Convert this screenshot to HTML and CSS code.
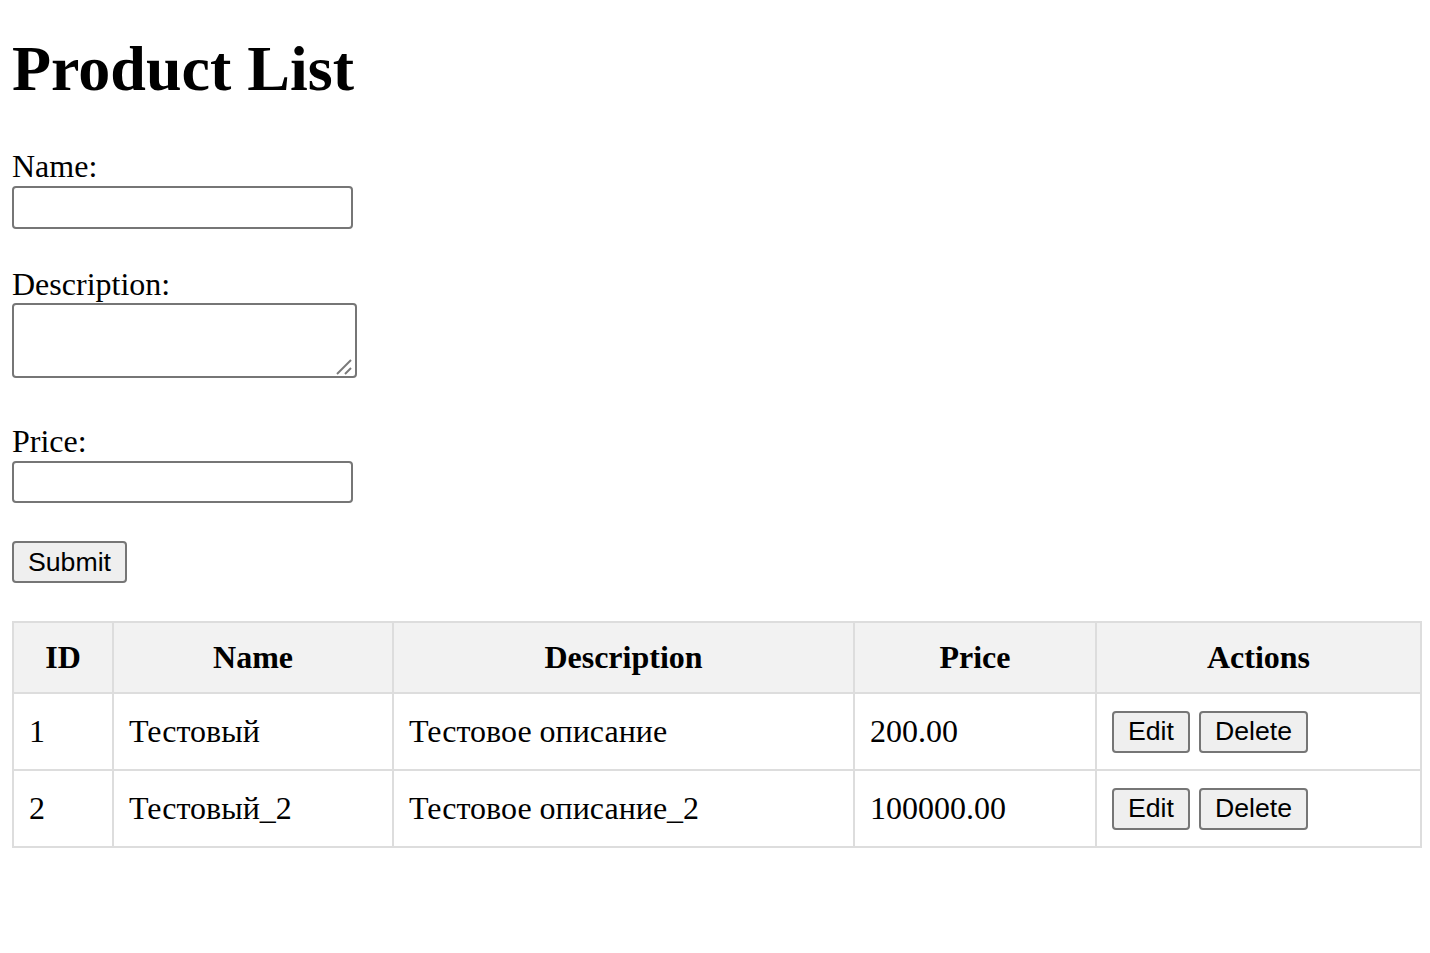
FILE: index.html
```html
<!DOCTYPE html>
<html lang="en">
<head>
<meta charset="utf-8">
<title>Product List</title>
<link rel="stylesheet" href="styles.css">
</head>
<body>
<div class="page">
  <h1 class="title">Product List</h1>
  <form class="product-form">
    <label class="field-label field-label--first" for="name">Name:</label>
    <input class="text-input text-input--name" id="name" type="text">
    <label class="field-label" for="description">Description:</label>
    <div class="textarea-wrap">
      <textarea class="text-area" id="description"></textarea>
      <svg class="grip" width="20" height="20" viewBox="0 0 20 20" aria-hidden="true">
        <line x1="3" y1="18" x2="17" y2="4" stroke="#7a7a7a" stroke-width="2"/>
        <line x1="11" y1="18" x2="17" y2="12" stroke="#7a7a7a" stroke-width="2"/>
      </svg>
    </div>
    <label class="field-label field-label--after-area" for="price">Price:</label>
    <input class="text-input" id="price" type="text">
    <div class="submit-row">
      <button class="btn" type="button">Submit</button>
    </div>
  </form>

  <table class="products">
    <colgroup>
      <col class="col-id">
      <col class="col-name">
      <col class="col-desc">
      <col class="col-price">
      <col class="col-actions">
    </colgroup>
    <thead>
      <tr>
        <th>ID</th>
        <th>Name</th>
        <th>Description</th>
        <th>Price</th>
        <th>Actions</th>
      </tr>
    </thead>
    <tbody>
      <tr>
        <td>1</td>
        <td>Тестовый</td>
        <td>Тестовое описание</td>
        <td>200.00</td>
        <td class="actions-cell"><div class="actions"><button class="btn" type="button">Edit</button><button class="btn" type="button">Delete</button></div></td>
      </tr>
      <tr>
        <td>2</td>
        <td>Тестовый_2</td>
        <td>Тестовое описание_2</td>
        <td>100000.00</td>
        <td class="actions-cell"><div class="actions"><button class="btn" type="button">Edit</button><button class="btn" type="button">Delete</button></div></td>
      </tr>
    </tbody>
  </table>
</div>
</body>
</html>
```

FILE: styles.css
```css
html, body {
  margin: 0;
  padding: 0;
  background: #ffffff;
}

body {
  font-family: "Liberation Serif", "Times New Roman", serif;
  font-size: 32px;
  color: #000000;
}

.page {
  padding: 32px 8px 40px 12px;
}

.title {
  margin: 0;
  font-size: 64px;
  font-weight: bold;
  line-height: 74px;
}

.product-form {
  display: flex;
  flex-direction: column;
  align-items: flex-start;
}

.field-label {
  display: block;
  line-height: 37px;
  margin-top: 37px;
}

.field-label--first {
  margin-top: 42px;
}

.field-label--after-area {
  margin-top: 45px;
}

.text-input {
  display: block;
  box-sizing: border-box;
  width: 341px;
  height: 42px;
  margin: 1px 0 0;
  border: 2px solid #767676;
  border-radius: 4px;
  background: #ffffff;
  font-family: "Liberation Sans", Arial, sans-serif;
  font-size: 26.67px;
  padding: 2px 4px;
}

.text-input--name {
  height: 43px;
}

.textarea-wrap {
  position: relative;
  width: 345px;
  height: 75px;
}

.text-area {
  display: block;
  box-sizing: border-box;
  width: 345px;
  height: 75px;
  margin: 0;
  border: 2px solid #767676;
  border-radius: 4px;
  background: #ffffff;
  resize: none;
  font-family: "Liberation Mono", monospace;
  font-size: 26.67px;
  padding: 4px;
}

.grip {
  position: absolute;
  right: 3px;
  bottom: 2px;
}

.submit-row {
  margin-top: 38px;
}

.btn {
  box-sizing: border-box;
  height: 42px;
  padding: 0 14px;
  border: 2px solid #767676;
  border-radius: 4px;
  background: #efefef;
  color: #000000;
  font-family: "Liberation Sans", Arial, sans-serif;
  font-size: 26.67px;
  line-height: normal;
  margin: 0;
}

.products {
  margin-top: 38px;
  width: 100%;
  table-layout: fixed;
  border-collapse: collapse;
  border: 2px solid #dddddd;
}

.col-id { width: 100px; }
.col-name { width: 280px; }
.col-desc { width: 461px; }
.col-price { width: 242px; }
.col-actions { width: auto; }

.products th,
.products td {
  border: 2px solid #dddddd;
  padding: 0 15px;
  white-space: nowrap;
}

.products th {
  background: #f2f2f2;
  font-weight: bold;
  text-align: center;
  line-height: 69px;
}

.products td {
  text-align: left;
  line-height: 75px;
}

.actions {
  display: flex;
  align-items: center;
  gap: 9px;
  height: 75px;
}
```
